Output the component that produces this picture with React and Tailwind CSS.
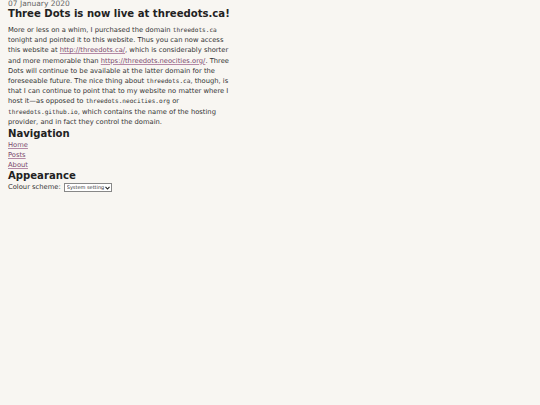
export default function App() {
  const mono = "font-['DejaVu_Sans_Mono',monospace] text-[6.1px]";
  const link = "text-[#7b4a6d] underline decoration-[#b58aa6]";
  return (
    <div className="min-h-[405px] w-full bg-[#f8f6f2] font-['DejaVu_Sans',sans-serif] text-[#333] px-2">
      <div className="w-[224px]">
        <div className="text-[7.5px] leading-[8px] text-[#666]">07 January 2020</div>
        <h1 className="text-[10.1px] leading-[11px] font-bold text-[#222] whitespace-nowrap">Three Dots is now live at threedots.ca!</h1>
        <p className="mt-[6px] text-[6.75px] leading-[10.2px]">
          More or less on a whim, I purchased the domain <code className={mono}>threedots.ca</code> tonight and pointed it to this website. Thus you can now access this website at <a className={link} href="#">http://threedots.ca/</a>, which is considerably shorter and more memorable than <a className={link} href="#">https://threedots.neocities.org/</a>. Three Dots will continue to be available at the latter domain for the foreseeable future. The nice thing about <code className={mono}>threedots.ca</code>, though, is that I can continue to point that to my website no matter where I host it—as opposed to <code className={mono}>threedots.neocities.org</code> or <code className={mono}>threedots.github.io</code>, which contains the name of the hosting provider, and in fact they control the domain.
        </p>
        <h2 className="mt-[1px] text-[10.1px] leading-[12px] font-bold text-[#222]">Navigation</h2>
        <ul className="text-[6.75px] leading-[10px]">
          <li><a className={link} href="#">Home</a></li>
          <li><a className={link} href="#">Posts</a></li>
          <li><a className={link} href="#">About</a></li>
        </ul>
        <h2 className="text-[10.1px] leading-[12px] font-bold text-[#222]">Appearance</h2>
        <div className="text-[6.75px] leading-[10px] flex items-center gap-[3px]">
          <span>Colour scheme:</span>
          <div className="relative flex items-center h-[9px] w-[48px] border border-[#888] bg-white">
            <select className="appearance-none w-full h-full text-[5px] leading-[7px] pl-[2px] pr-0 bg-transparent outline-none">
              <option>System setting</option>
            </select>
            <svg className="absolute right-[1px] top-[2.5px] pointer-events-none" width="5" height="4" viewBox="0 0 5 4">
              <path d="M0.5 0.8 L2.5 3 L4.5 0.8" fill="none" stroke="#222" strokeWidth="1.1" />
            </svg>
          </div>
        </div>
      </div>
    </div>
  );
}
